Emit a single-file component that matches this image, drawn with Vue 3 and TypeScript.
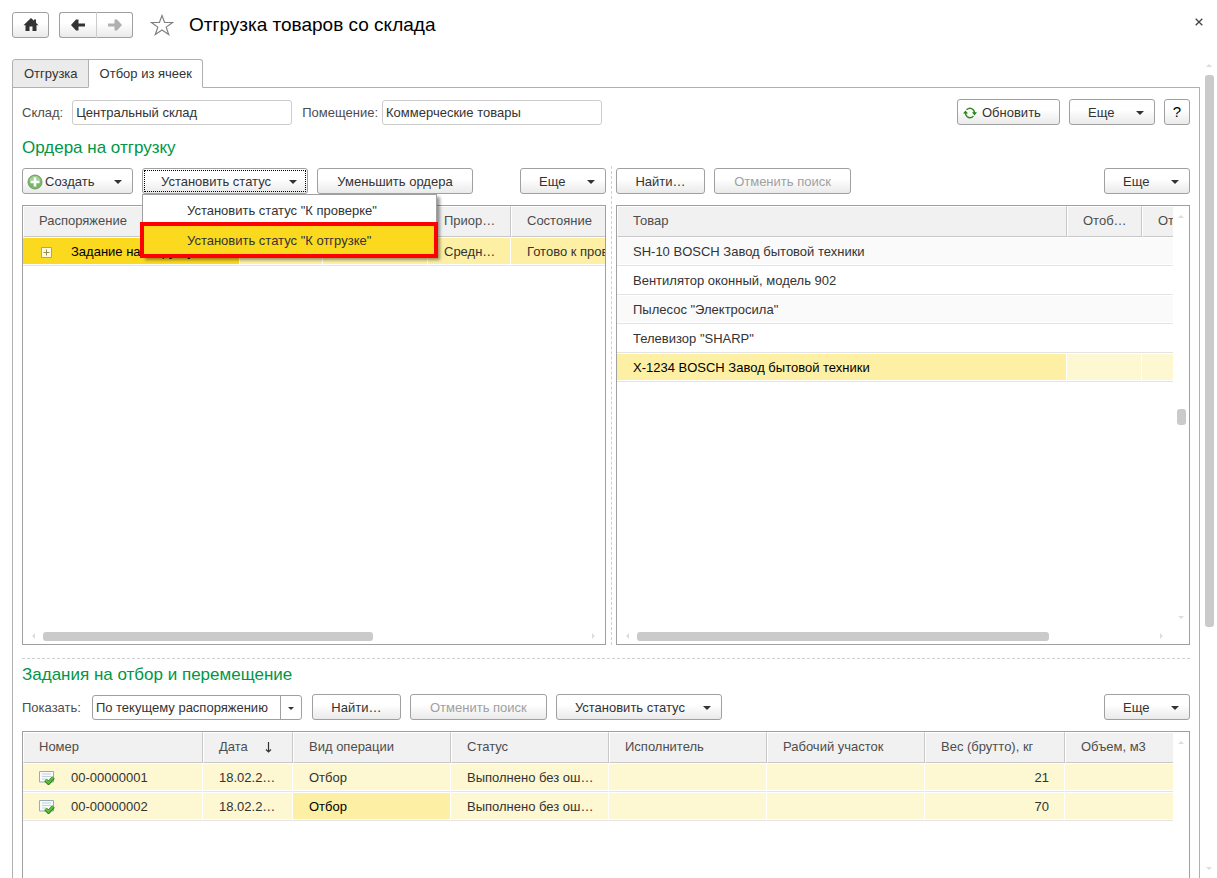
<script setup lang="ts">
import { ref } from 'vue'

interface Product {
  name: string
  selected?: boolean
}
interface Task {
  id: string
  date: string
  kind: string
  status: string
  weight: number
  active?: boolean
}

const warehouse = ref('Центральный склад')
const room = ref('Коммерческие товары')
const filter = ref('По текущему распоряжению')

const products: Product[] = [
  { name: 'SH-10 BOSCH Завод бытовой техники' },
  { name: 'Вентилятор оконный, модель 902' },
  { name: 'Пылесос "Электросила"' },
  { name: 'Телевизор "SHARP"' },
  { name: 'X-1234 BOSCH Завод бытовой техники', selected: true },
]
const tasks: Task[] = [
  { id: '00-00000001', date: '18.02.2…', kind: 'Отбор', status: 'Выполнено без ош…', weight: 21 },
  { id: '00-00000002', date: '18.02.2…', kind: 'Отбор', status: 'Выполнено без ош…', weight: 70, active: true },
]
</script>

<template>
  <div class="window">
    <header class="titlebar">
      <button class="btn home" aria-label="Домой">
        <svg width="16" height="14" viewBox="0 0 16 14"><path d="M8 0 .5 7.2h2V13h4V8.500h3V13h4V7.2h2L13 4.7V1.500h-2v1.300z" fill="#333" /></svg>
      </button>
      <div class="history">
        <button class="btn back" aria-label="Назад">
          <svg width="16" height="12" viewBox="0 0 16 12"><path d="M1 6 6 .5h2.500V4.500H15v3H8.500v4H6z" fill="#333" /></svg>
        </button>
        <button class="btn forward" aria-label="Вперед" disabled>
          <svg width="16" height="12" viewBox="0 0 16 12"><path d="M15 6 10 .5H7.500V4.500H1v3h6.500v4H10z" fill="#b0b0b0" /></svg>
        </button>
      </div>
      <button class="plain star" aria-label="В избранное">
        <svg width="24" height="22" viewBox="0 0 24 22"><path d="M12 1.500 14.600 8.500H22.500L16.200 13.100 18.700 20.500 12 16 5.300 20.500 7.800 13.100 1.500 8.500H9.400Z" fill="#fff" stroke="#808080" stroke-width="1.200" /></svg>
      </button>
      <h1>Отгрузка товаров со склада</h1>
      <button class="plain close" aria-label="Закрыть">
        <svg width="8" height="8" viewBox="0 0 8 8"><path d="m.7.7 6.600 6.600M7.300.7.7 7.300" stroke="#444" stroke-width="1.300" /></svg>
      </button>
    </header>

    <div class="body">
      <main class="form">
        <nav class="tabs" role="tablist">
          <button class="tab" role="tab" aria-selected="false">Отгрузка</button>
          <button class="tab current" role="tab" aria-selected="true">Отбор из ячеек</button>
        </nav>

        <div class="panel">
          <div class="bar filters">
            <label for="warehouse">Склад:</label>
            <input id="warehouse" v-model="warehouse" class="field" type="text" />
            <label for="room" class="second">Помещение:</label>
            <input id="room" v-model="room" class="field" type="text" />
            <button class="btn refresh push">
              <svg width="14" height="12" viewBox="0 0 14 12">
                <path d="M3.500 2.800Q7-.2 10 2.500 11.500 4 11.500 6M10.500 9.200Q7 12.200 4 9.500 2.500 8 2.500 6" fill="none" stroke="#2f8a1c" stroke-width="1.500" />
                <path d="M9 5.200h5L11.500 8.400zM0 6.600h5L2.500 3.400z" fill="#2f7d1c" />
              </svg>
              <span>Обновить</span>
            </button>
            <button class="btn more"><span>Еще</span><i class="caret"></i></button>
            <button class="btn help">?</button>
          </div>

          <div class="split">
            <section class="pane orders">
              <h2>Ордера на отгрузку</h2>
              <div class="bar">
                <button class="btn create">
                  <svg width="16" height="16" viewBox="0 0 16 16">
                    <circle cx="8" cy="8" r="7" fill="#79b866" stroke="#6f9f63" />
                    <path d="M2.500 7a5.500 5 0 0 1 11 0z" fill="#a4d095" />
                    <path d="M8 3.500v9M3.500 8h9" stroke="#fff" stroke-width="2.600" />
                  </svg>
                  <span>Создать</span><i class="caret"></i>
                </button>
                <div class="dropdown">
                  <button class="btn status focused" aria-haspopup="menu" aria-expanded="true"><span>Установить статус</span><i class="caret"></i></button>
                  <div class="menu" role="menu">
                    <button class="item" role="menuitem">Установить статус "К проверке"</button>
                    <button class="item marked" role="menuitem">Установить статус "К отгрузке"</button>
                  </div>
                </div>
                <button class="btn reduce">Уменьшить ордера</button>
                <button class="btn more push"><span>Еще</span><i class="caret"></i></button>
              </div>
              <div class="grid upper">
                <div class="view">
                  <table class="orders-table">
                    <colgroup><col class="w217" /><col class="w83" /><col class="w105" /><col class="w83" /><col class="w158" /></colgroup>
                    <thead><tr><th>Распоряжение</th><th></th><th></th><th>Приор…</th><th>Состояние</th></tr></thead>
                    <tbody>
                      <tr class="chosen">
                        <td class="active tree">
                          <svg width="11" height="11" viewBox="0 0 11 11"><path d="M.5.5h10v10H.5z" fill="#fffbe0" stroke="#b5a468" /><path d="M5.500 2.500v6M2.500 5.500h6" stroke="#9a8a50" /></svg>
                          <span>Задание на отгрузку</span>
                        </td>
                        <td></td><td></td><td>Средн…</td><td>Готово к проверке</td>
                      </tr>
                    </tbody>
                  </table>
                </div>
                <div class="hscroll"><i class="arrow left"></i><div class="track"><i class="thumb orders-thumb"></i></div><i class="arrow right"></i></div>
              </div>
            </section>

            <section class="pane">
              <div class="bar goods-bar">
                <button class="btn find">Найти…</button>
                <button class="btn cancel" disabled>Отменить поиск</button>
                <button class="btn more push"><span>Еще</span><i class="caret"></i></button>
              </div>
              <div class="grid upper scrolled">
                <div class="view">
                  <table class="goods-table">
                    <colgroup><col class="w450" /><col class="w75" /><col class="w75" /></colgroup>
                    <thead><tr><th>Товар</th><th>Отоб…</th><th>Отобрано</th></tr></thead>
                    <tbody>
                      <tr v-for="p in products" :key="p.name" :class="{ picked: p.selected }">
                        <td :class="{ cursor: p.selected }">{{ p.name }}</td><td></td><td></td>
                      </tr>
                    </tbody>
                  </table>
                </div>
                <div class="vscroll"><i class="arrow up"></i><i class="thumb goods-v"></i><i class="arrow down"></i></div>
                <div class="hscroll"><i class="arrow left"></i><div class="track"><i class="thumb goods-thumb"></i></div><i class="arrow right"></i></div>
              </div>
            </section>
          </div>

          <section class="tasks">
            <h2>Задания на отбор и перемещение</h2>
            <div class="bar">
              <label for="filter" class="show">Показать:</label>
              <div class="combo">
                <select id="filter" v-model="filter"><option>По текущему распоряжению</option></select>
                <i class="caret small"></i>
              </div>
              <button class="btn find">Найти…</button>
              <button class="btn cancel" disabled>Отменить поиск</button>
              <button class="btn status"><span>Установить статус</span><i class="caret"></i></button>
              <button class="btn more push"><span>Еще</span><i class="caret"></i></button>
            </div>
            <div class="grid lower scrolled">
              <div class="view">
                <table class="tasks-table">
                  <colgroup><col class="w180" /><col class="w90" /><col class="w158" /><col class="w158" /><col class="w158" /><col class="w158" /><col class="w140" /><col /></colgroup>
                  <thead>
                    <tr>
                      <th>Номер</th>
                      <th class="sorted">Дата<svg width="7" height="11" viewBox="0 0 7 11"><path d="M3.500 0v10M1 7.500l2.500 2.500L6 7.500" fill="none" stroke="#333" stroke-width="1.200" /></svg></th>
                      <th>Вид операции</th><th>Статус</th><th>Исполнитель</th><th>Рабочий участок</th><th>Вес (брутто), кг</th><th>Объем, м3</th>
                    </tr>
                  </thead>
                  <tbody>
                    <tr v-for="t in tasks" :key="t.id" class="picked">
                      <td class="doc">
                        <svg width="16" height="14" viewBox="0 0 16 14">
                          <path d="M.5.5h14v10.500H.5z" fill="#f7fafc" stroke="#9aabb8" />
                          <path d="M3 3h9M3 5.500h9M3 8h4" stroke="#c3d0db" />
                          <path d="m6.500 9 3 3 5-5.500" fill="none" stroke="#2c7d17" stroke-width="3.600" />
                          <path d="m6.500 8.700 3 3 5-5.500" fill="none" stroke="#5fc03a" stroke-width="2" />
                        </svg>
                        <span>{{ t.id }}</span>
                      </td>
                      <td>{{ t.date }}</td>
                      <td :class="{ cursor: t.active }">{{ t.kind }}</td>
                      <td>{{ t.status }}</td><td></td><td></td>
                      <td class="num">{{ t.weight }}</td><td></td>
                    </tr>
                  </tbody>
                </table>
              </div>
              <div class="vscroll"><i class="arrow up"></i></div>
            </div>
          </section>
        </div>
      </main>
      <div class="page-scroll"><i class="arrow up"></i><i class="thumb page-thumb"></i><i class="arrow down"></i></div>
    </div>
  </div>
</template>

<style>
body {
  margin: 0;
  background: #fff;
}
</style>

<style scoped>
* {
  box-sizing: border-box;
}
.window {
  display: flex;
  flex-direction: column;
  height: 100vh;
  overflow: hidden;
  background: #fff;
  color: #333;
  font: 13px/16px "Liberation Sans", Arial, sans-serif;
}
button,
input,
select {
  font: inherit;
  color: inherit;
  margin: 0;
}
svg {
  display: block;
  flex: none;
}
h1 {
  margin: 0 0 0 15px;
  color: #000;
  font-size: 19px;
  line-height: 24px;
  font-weight: 400;
}
h2 {
  margin: 0;
  color: #009646;
  font-size: 17px;
  line-height: 20px;
  font-weight: 400;
}
.titlebar {
  flex: none;
  display: flex;
  align-items: center;
  height: 59px;
  padding: 0 13px 10px 12px;
}
.plain {
  padding: 0;
  border: 0;
  background: none;
}
.star {
  margin-left: 17px;
}
.close {
  margin-left: auto;
  padding: 1px;
  margin-bottom: 6px;
}
.btn {
  display: flex;
  flex: none;
  align-items: center;
  justify-content: center;
  height: 26px;
  padding: 1px 0 0;
  border: 1px solid #a0a0a0;
  border-radius: 3px;
  background: linear-gradient(#fff 40%, #eaeaea);
  white-space: nowrap;
}
.titlebar .btn {
  padding: 0;
}
.btn:disabled {
  color: #a0a0a0;
}
.home {
  width: 37px;
  margin-right: 10px;
}
.history {
  display: flex;
}
.back {
  width: 38px;
  border-right-color: #ccc;
  border-radius: 3px 0 0 3px;
}
.forward {
  width: 36px;
  border-left: 0;
  border-radius: 0 3px 3px 0;
}
.body {
  flex: 1;
  display: flex;
  min-height: 0;
}
.form {
  flex: 1;
  min-width: 0;
  display: flex;
  flex-direction: column;
  padding-left: 12px;
}
.tabs {
  display: flex;
  flex: none;
  height: 29px;
  margin-bottom: -1px;
  position: relative;
}
.tab {
  height: 29px;
  padding: 0 10px 0 11px;
  border: 1px solid #b0b0b0;
  background: #ebebeb;
  border-radius: 3px 0 0 0;
}
.tab.current {
  margin-left: -1px;
  background: #fff;
  border-bottom-color: #fff;
  border-radius: 0 3px 0 0;
}
.panel {
  flex: 1;
  min-height: 0;
  display: flex;
  flex-direction: column;
  padding: 11px 9px 0;
  border: 1px solid #b0b0b0;
  border-bottom: 0;
}
.bar {
  display: flex;
  flex: none;
  align-items: center;
  gap: 9px;
}
label {
  padding-top: 1px;
  color: #4d4d4d;
}
.second {
  margin-left: 1px;
  margin-right: -5px;
}
.field {
  width: 220px;
  height: 25px;
  padding: 0 3px;
  border: 1px solid #ccc;
  border-radius: 3px;
  background: #fff;
  outline: 0;
}
.push {
  margin-left: auto;
}
.more {
  width: 86px;
  padding: 1px 10px 0 18px;
  justify-content: space-between;
}
.refresh {
  width: 103px;
  padding: 1px 5px 0;
  gap: 5px;
  justify-content: flex-start;
}
.help {
  width: 26px;
  padding: 0;
  color: #000;
  font-size: 15px;
}
.create {
  width: 111px;
  padding: 1px 10px 0 4px;
  gap: 2px;
}
.create .caret {
  margin-left: auto;
}
.status {
  width: 166px;
  padding: 1px 10px 0 18px;
  justify-content: space-between;
}
.focused {
  outline: 1px dotted #000;
  outline-offset: -3px;
}
.reduce {
  width: 156px;
}
.find {
  width: 89px;
}
.cancel {
  width: 137px;
}
.caret {
  flex: none;
  border: 4px solid transparent;
  border-top-color: #333;
  border-bottom: 0;
}
.split {
  display: grid;
  flex: none;
  grid-template-columns: 584fr 574fr;
  gap: 10px;
  padding: 13px 0;
  border-bottom: 1px dashed #d0d0d0;
}
.pane {
  min-width: 0;
  display: flex;
  flex-direction: column;
}
.orders {
  position: relative;
}
.orders::after {
  content: "";
  position: absolute;
  right: -6px;
  top: 28px;
  bottom: 0;
  border-left: 1px dashed #d0d0d0;
}
.orders .bar {
  margin-top: 10px;
}
.goods-bar {
  margin-top: 30px;
}
.dropdown {
  position: relative;
}
.menu {
  position: absolute;
  z-index: 5;
  top: 26px;
  left: 0;
  width: 295px;
  border: 1px solid #a0a0a0;
  background: #fff;
  box-shadow: 3px 3px 3px rgba(0, 0, 0, 0.4);
}
.item {
  display: block;
  width: 100%;
  height: 31px;
  padding: 0 0 0 44px;
  border: 0;
  background: #fff;
  text-align: left;
}
.item.marked {
  position: relative;
  width: 298px;
  height: 36px;
  margin: -4px -2px -2px -3px;
  padding: 1px 0 0 43px;
  border: 4px solid #f00;
  background: #fbd91f;
}
.grid {
  display: grid;
  grid-template: 1fr 16px / minmax(0, 1fr);
  margin-top: 11px;
  border: 1px solid #a0a0a0;
}
.grid.scrolled {
  grid-template-columns: minmax(0, 1fr) 16px;
}
.upper {
  height: 440px;
}
.view {
  overflow: hidden;
}
table {
  width: 100%;
  table-layout: fixed;
  border-collapse: separate;
  border-spacing: 0;
}
.orders-table {
  width: 646px;
}
.goods-table {
  width: 600px;
}
.w75 { width: 75px; }
.w83 { width: 83px; }
.w90 { width: 90px; }
.w105 { width: 105px; }
.w140 { width: 140px; }
.w158 { width: 158px; }
.w180 { width: 180px; }
.w217 { width: 217px; }
.w450 { width: 450px; }
th,
td {
  overflow: hidden;
  text-align: left;
  font-weight: 400;
  white-space: nowrap;
}
th {
  height: 31px;
  padding: 0 0 2px 15px;
  color: #4d4d4d;
  background: #f1f1f1;
  border: 1px solid #fff;
  border-right-color: #c8c8c8;
  border-bottom-color: #c8c8c8;
}
td {
  height: 29px;
  padding: 2px 0 0 16px;
  border-bottom: 1px solid #e4e4e4;
  box-shadow: inset 0 1px #fff, inset 0 -1px #fff;
}
tbody tr:nth-child(odd) td {
  background: #fafafa;
}
tbody tr.chosen td,
tbody tr.picked td {
  border-right: 1px solid #fff;
  background: #fdf7d2;
}
tbody tr.chosen td,
tbody tr.picked td.cursor {
  background: #fdf0a4;
}
tbody tr.chosen td.active {
  background: #fbd91f;
}
.tasks-table th:last-child,
.tasks-table tr.picked td:last-child {
  border-right: 0;
}
td.cursor,
td.active {
  color: #000;
}
.tree svg,
.doc svg,
.tree span,
.doc span {
  display: inline-block;
  vertical-align: middle;
}
.tree svg {
  margin: 0 19px 0 2px;
}
.doc svg {
  margin-right: 16px;
}
.sorted svg {
  display: inline-block;
  margin-left: 17px;
  vertical-align: -2px;
}
td.num {
  padding-right: 15px;
  text-align: right;
}
.hscroll {
  grid-column: 1;
  grid-row: 2;
  display: flex;
  align-items: center;
  padding: 0 10px 0 9px;
}
.track {
  flex: 1;
  margin: 0 8px;
}
.thumb {
  display: block;
  flex: none;
  border-radius: 3px;
  background: #cacaca;
}
.orders-thumb {
  width: 61%;
  height: 9px;
}
.goods-thumb {
  width: 80%;
  height: 9px;
}
.arrow {
  flex: none;
  border: 3px solid transparent;
}
.arrow.left {
  border-left: 0;
  border-right-color: #ddd;
}
.arrow.right {
  border-right: 0;
  border-left-color: #ddd;
}
.arrow.up {
  border-top: 0;
  border-bottom-color: #ddd;
}
.arrow.down {
  border-bottom: 0;
  border-top-color: #ddd;
}
.vscroll {
  grid-column: 2;
  grid-row: 1;
  display: flex;
  flex-direction: column;
  align-items: center;
  justify-content: space-between;
  padding: 9px 0;
}
.goods-v {
  width: 9px;
  height: 16px;
}
.tasks {
  flex: 1;
  min-height: 0;
  display: flex;
  flex-direction: column;
  padding-top: 6px;
}
.tasks .bar {
  margin-top: 9px;
}
.show {
  margin-right: 2px;
}
.combo {
  position: relative;
  width: 210px;
  margin-right: 1px;
}
.combo select {
  display: block;
  width: 100%;
  height: 25px;
  padding: 1px 24px 0 3px;
  border: 1px solid #a0a0a0;
  border-radius: 3px;
  background: linear-gradient(#a0a0a0, #a0a0a0) right 20px top / 1px 100% no-repeat #fff;
  appearance: none;
}
.caret.small {
  position: absolute;
  top: 12px;
  right: 8px;
  border-width: 3px 3px 0;
  pointer-events: none;
}
.lower {
  flex: 1;
  border-bottom: 0;
}
.page-scroll {
  flex: none;
  display: flex;
  flex-direction: column;
  align-items: center;
  width: 17px;
  padding: 5px 0 8px 1px;
}
.page-thumb {
  width: 9px;
  height: 68.5%;
  margin: 8px 0 auto;
}
</style>
